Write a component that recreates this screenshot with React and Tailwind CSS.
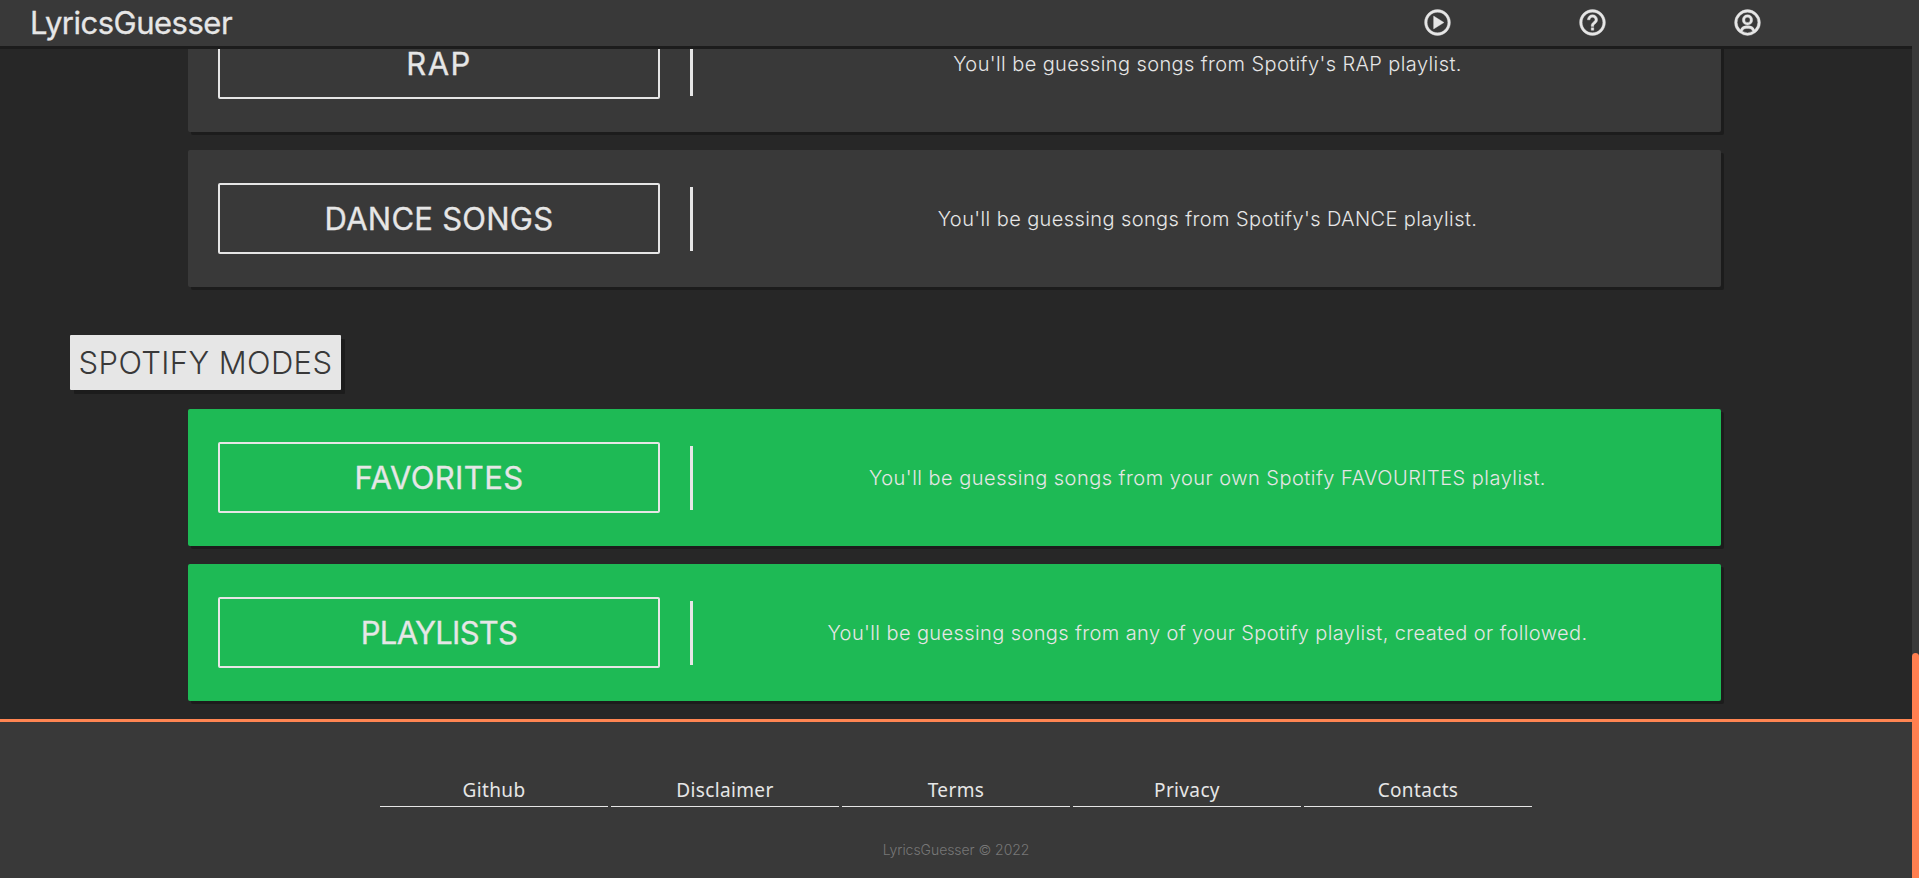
import { BiHelpCircle, BiPlayCircle, BiUserCircle } from "react-icons/bi";

const playlists = [
  { title: "RAP", text: "You'll be guessing songs from Spotify's RAP playlist.", spacing: "tracking-[1.4px]", textSpacing: "tracking-[0.4px]" },
  { title: "DANCE SONGS", text: "You'll be guessing songs from Spotify's DANCE playlist.", spacing: "tracking-[0.25px]", textSpacing: "tracking-[0.4px]" },
];

const spotify = [
  { title: "FAVORITES", text: "You'll be guessing songs from your own Spotify FAVOURITES playlist.", spacing: "tracking-[0.35px]", textSpacing: "tracking-[0.48px]" },
  { title: "PLAYLISTS", text: "You'll be guessing songs from any of your Spotify playlist, created or followed.", spacing: "tracking-[-0.75px]", textSpacing: "tracking-[0.4px]" },
];

const links = ["Github", "Disclaimer", "Terms", "Privacy", "Contacts"];

function ModeCard({ mode, color }) {
  return (
    <article className={`ml-[188px] flex h-[137px] w-[1533px] shrink-0 items-center rounded-[2px] pl-[30px] shadow-[3px_3px_0_#1c1c1c] ${color}`}>
      <button className={`h-[71px] w-[442px] rounded-[2px] border-2 border-[#e6e6e6] text-[31px] leading-none [-webkit-text-stroke:0.3px] ${mode.spacing}`}>
        {mode.title}
      </button>
      <div className="ml-[30px] h-16 w-[3px] bg-[#e6e6e6]" />
      <p className={`flex-1 pl-px text-center text-[20px] font-light ${mode.textSpacing}`}>{mode.text}</p>
    </article>
  );
}

export default function App() {
  return (
    <div className="flex h-[878px] w-full overflow-hidden bg-[#272727] font-['Inter',sans-serif] text-[#e6e6e6]">
      <div className="flex w-[1912px] shrink-0 flex-col">
        <header className="relative z-10 flex h-[46px] shrink-0 items-center justify-between bg-[#393939] pr-[149px] pb-px pl-[30px] shadow-[0_3px_0_#1c1c1c]">
          <h1 className="text-[31px] leading-none tracking-[-0.5px] [-webkit-text-stroke:0.3px]">LyricsGuesser</h1>
          <nav className="flex gap-[124px]">
            <BiPlayCircle className="size-[31px] stroke-current stroke-[0.3]" />
            <BiHelpCircle className="size-[31px] stroke-current stroke-[0.3]" />
            <BiUserCircle className="size-[31px] stroke-current stroke-[0.3]" />
          </nav>
        </header>

        <main className="flex h-[673px] shrink-0 flex-col overflow-hidden">
          <section className="-mt-[51px] flex flex-col gap-[18px]">
            {playlists.map((mode) => (
              <ModeCard key={mode.title} mode={mode} color="bg-[#393939]" />
            ))}
          </section>
          <h2 className="mt-12 ml-[70px] flex h-[55px] w-[271px] shrink-0 items-center justify-center rounded-[1px] bg-[#e6e6e6] pb-px text-[31px] leading-none font-light tracking-[0.4px] whitespace-nowrap text-[#393939] shadow-[4px_4px_0_#1c1c1c]">
            SPOTIFY MODES
          </h2>
          <section className="mt-[19px] flex flex-col gap-[18px]">
            {spotify.map((mode) => (
              <ModeCard key={mode.title} mode={mode} color="bg-[#1eba55]" />
            ))}
          </section>
        </main>

        <footer className="flex flex-1 flex-col items-center border-t-[3px] border-[#ff8552] bg-[#393939]">
          <nav className="mt-[53px] flex gap-[3px]">
            {links.map((link) => (
              <a key={link} className="h-[32px] w-[228px] border-b border-[#e6e6e6] text-center font-['Noto_Sans',sans-serif] text-[19px] leading-[31px] tracking-[0.35px]">
                {link}
              </a>
            ))}
          </nav>
          <p className="mt-[33px] text-[14px] leading-5 font-light tracking-[-0.05px] text-[#777]">LyricsGuesser © 2022</p>
        </footer>
      </div>
      <div className="flex w-[7px] flex-col justify-end bg-[#393939]">
        <div className="h-[225px] rounded-t-[4px] bg-[#ff7f50]" />
      </div>
    </div>
  );
}
